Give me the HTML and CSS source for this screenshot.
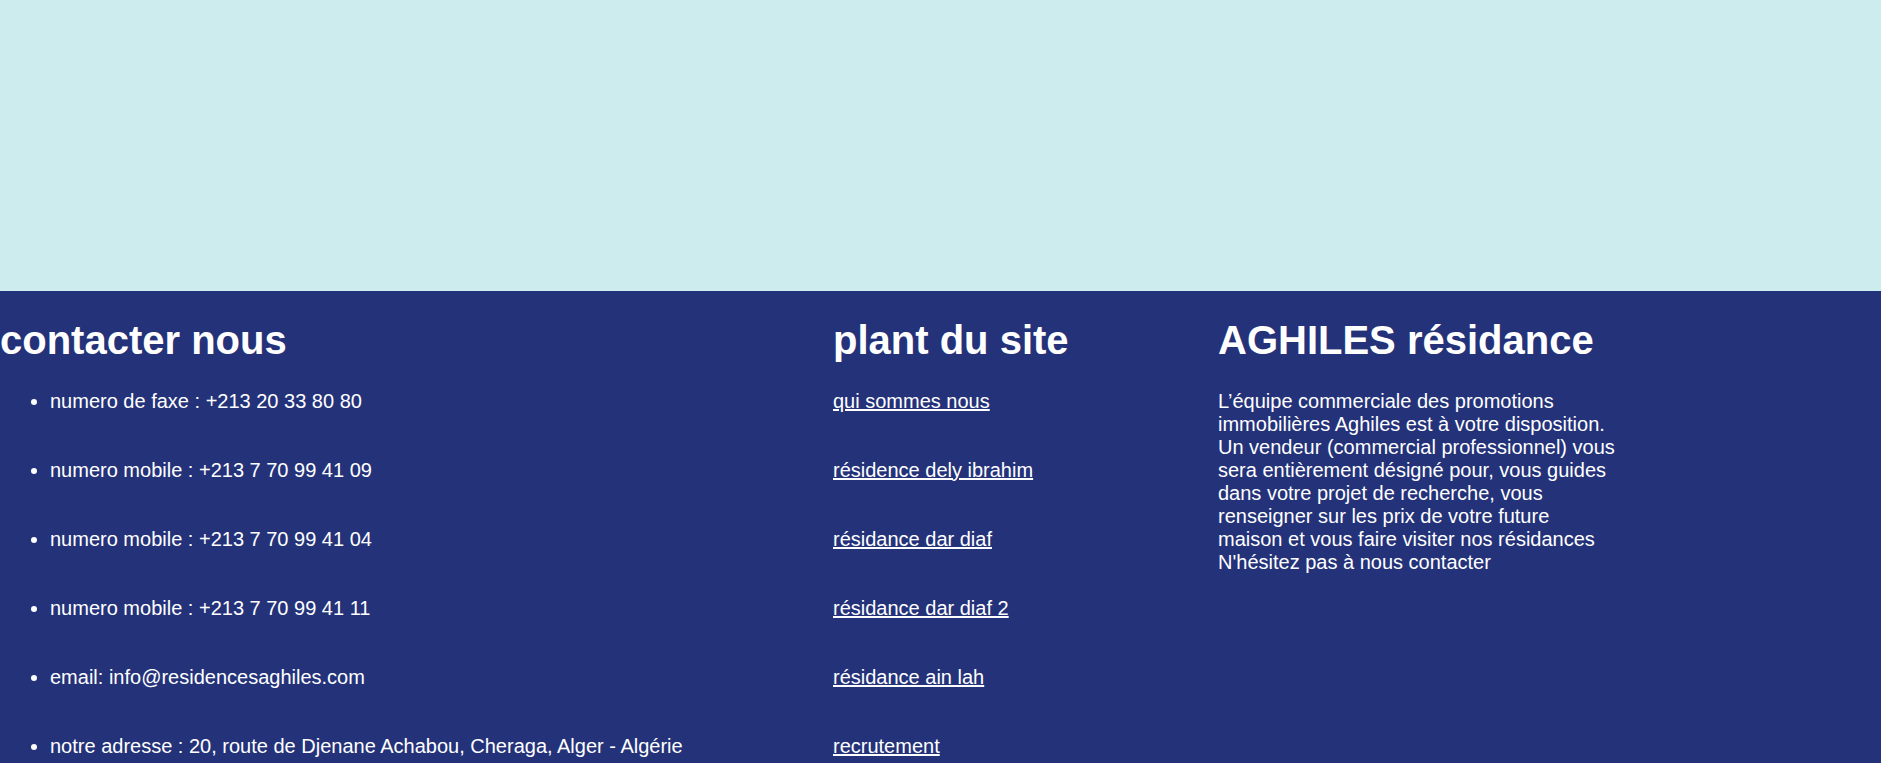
FILE: index.html
```html
<!DOCTYPE html>
<html lang="fr">
<head>
<meta charset="utf-8">
<title>AGHILES résidance</title>
<link rel="stylesheet" href="styles.css">
</head>
<body>
<div class="hero"></div>
<footer class="footer">
  <section class="col col-contact">
    <h1 class="col-title">contacter nous</h1>
    <ul class="contact-list">
      <li>numero de faxe : +213 20 33 80 80</li>
      <li>numero mobile : +213 7 70 99 41 09</li>
      <li>numero mobile : +213 7 70 99 41 04</li>
      <li>numero mobile : +213 7 70 99 41 11</li>
      <li>email: info@residencesaghiles.com</li>
      <li>notre adresse : 20, route de Djenane Achabou, Cheraga, Alger - Algérie</li>
    </ul>
  </section>
  <section class="col col-plan">
    <h1 class="col-title">plant du site</h1>
    <nav class="site-links">
      <a href="#">qui sommes nous</a>
      <a href="#">résidence dely ibrahim</a>
      <a href="#">résidance dar diaf</a>
      <a href="#">résidance dar diaf 2</a>
      <a href="#">résidance ain lah</a>
      <a href="#">recrutement</a>
    </nav>
  </section>
  <section class="col col-about">
    <h1 class="col-title">AGHILES résidance</h1>
    <p class="about-text">L’équipe commerciale des promotions immobilières Aghiles est à votre disposition. Un vendeur (commercial professionnel) vous sera entièrement désigné pour, vous guides dans votre projet de recherche, vous renseigner sur les prix de votre future maison et vous faire visiter nos résidances<br>N'hésitez pas à nous contacter</p>
  </section>
</footer>
</body>
</html>
```

FILE: styles.css
```css
html, body {
  margin: 0;
  padding: 0;
}
body {
  font-family: "Liberation Sans", Arial, sans-serif;
  font-size: 20px;
  color: #ffffff;
  background: #24327a;
}
.hero {
  height: 291px;
  background: #cdeced;
}
.footer {
  display: flex;
  align-items: flex-start;
  background: #24327a;
  padding-bottom: 40px;
}
.col-contact {
  width: 833px;
}
.col-plan {
  width: 385px;
}
.col-about {
  width: 400px;
}
.col-title {
  font-size: 40px;
  font-weight: bold;
  margin: 26px 0 26.8px;
  line-height: 46px;
}
.contact-list {
  margin: 0;
  padding-left: 50px;
  list-style: disc;
}
.contact-list li {
  line-height: 23px;
  margin-bottom: 46px;
}
.site-links {
  display: flex;
  flex-direction: column;
  align-items: flex-start;
  gap: 46px;
}
.site-links a {
  color: #ffffff;
  text-decoration: underline;
  line-height: 23px;
}
.about-text {
  margin: 0;
  line-height: 23px;
}
```
